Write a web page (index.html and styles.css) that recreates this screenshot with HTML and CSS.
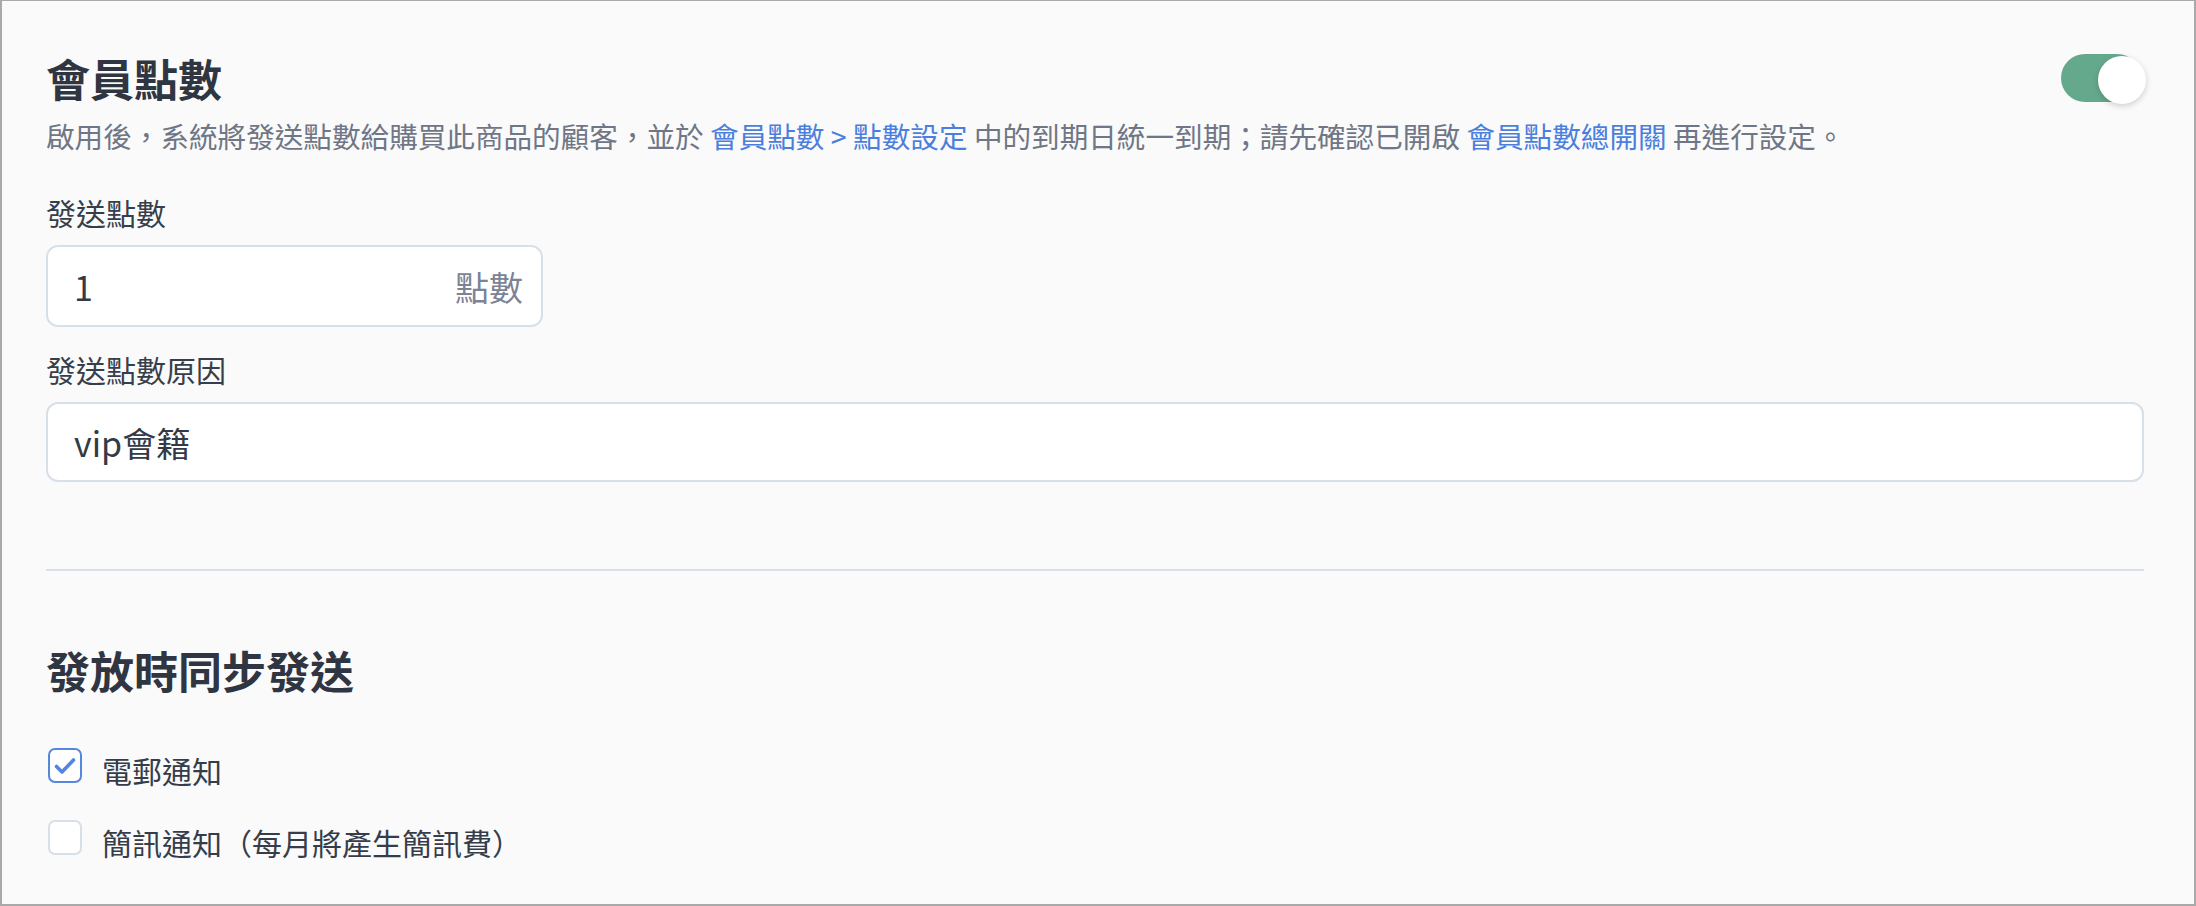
FILE: index.html
```html
<!DOCTYPE html>
<html lang="zh-Hant">
<head>
    <meta charset="UTF-8">
    <meta name="viewport" content="width=device-width, initial-scale=1.0">
    <title>會員點數</title>
    <link rel="stylesheet" href="styles.css">
</head>
<body>
    <div class="panel">
        <div class="header">
            <h1 class="title">會員點數</h1>
            <!-- 開關 -->
            <div class="switch on">
                <span class="knob"></span>
            </div>
        </div>
        <p class="desc">啟用後，系統將發送點數給購買此商品的顧客，並於 <a href="#">會員點數 &gt; 點數設定</a> 中的到期日統一到期；請先確認已開啟 <a href="#">會員點數總開關</a> 再進行設定。</p>

        <label class="field-label">發送點數</label>
        <div class="input short">
            <span class="value">1</span>
            <span class="suffix">點數</span>
        </div>

        <label class="field-label">發送點數原因</label>
        <div class="input">
            <span class="value">vip會籍</span>
        </div>

        <hr class="divider">

        <h2 class="section-title">發放時同步發送</h2>
        <div class="check-list">
            <div class="check-row">
                <span class="checkbox checked">
                    <svg viewBox="0 0 26 26" width="26" height="26"><polyline points="4.5,13.5 10,19 21.5,7" fill="none" stroke="#5484e0" stroke-width="3.6" stroke-linecap="round" stroke-linejoin="round"/></svg>
                </span>
                <span class="check-text">電郵通知</span>
            </div>
            <div class="check-row">
                <span class="checkbox"></span>
                <span class="check-text">簡訊通知（每月將產生簡訊費）</span>
            </div>
        </div>
    </div>
</body>
</html>
```

FILE: styles.css
```css
body {
    margin: 0;
    padding: 0;
    font-family: "Noto Sans CJK TC", "Noto Sans", sans-serif;
    color: #343b48;
}
.panel {
    box-sizing: border-box;
    height: 906px;
    background: #fafafa;
    border: 2px solid #a9a9a9;
    border-top-width: 1px;
    padding: 49px 50px 0 44px;
}
.header {
    display: flex;
    justify-content: space-between;
    align-items: center;
    height: 56px;
}
.title {
    margin: 0;
    font-size: 44px;
    line-height: 56px;
    font-weight: 700;
    color: #2f3541;
}
.switch {
    position: relative;
    width: 80px;
    height: 48px;
    border-radius: 24px;
    background: #65a98d;
    margin-right: 3px;
}
.knob {
    position: absolute;
    top: 2px;
    left: 37px;
    width: 48px;
    height: 48px;
    border-radius: 50%;
    background: #fff;
    box-shadow: 0 2px 6px rgba(0, 0, 0, 0.18);
}
.desc {
    margin: 10px 0 0;
    font-size: 28.6px;
    line-height: 40px;
    color: #6f7686;
}
.desc a {
    color: #4b7fdd;
    text-decoration: none;
}
.field-label {
    display: block;
    font-size: 30px;
    line-height: 40px;
    color: #373e4b;
    margin-top: 36px;
}
.input + .field-label {
    margin-top: 22px;
}
.input {
    box-sizing: border-box;
    display: flex;
    align-items: center;
    justify-content: space-between;
    height: 80px;
    margin-top: 13px;
    padding: 0 18px 0 26px;
    background: #fff;
    border: 2px solid #d7dfe8;
    border-radius: 12px;
    font-size: 34px;
    color: #333a47;
}
.input.short {
    width: 497px;
    height: 82px;
}
.suffix {
    color: #7b8394;
}
.divider {
    border: none;
    border-top: 2px solid #d8e0ea;
    margin: 87px 0 0;
}
.section-title {
    margin: 71px 0 0;
    font-size: 44px;
    line-height: 56px;
    font-weight: 700;
    color: #2f3541;
}
.check-list {
    margin-top: 52px;
    display: flex;
    flex-direction: column;
    gap: 32px;
}
.check-row {
    display: flex;
    align-items: flex-start;
    gap: 20px;
    line-height: 40px;
    font-size: 30px;
    color: #363d4a;
}
.checkbox {
    box-sizing: border-box;
    display: flex;
    align-items: center;
    justify-content: center;
    width: 34px;
    height: 35px;
    margin-top: -2px;
    margin-left: 2px;
    border: 2px solid #d7dfe9;
    border-radius: 7px;
    background: #fff;
}
.checkbox.checked {
    border-color: #5586e0;
}
```
